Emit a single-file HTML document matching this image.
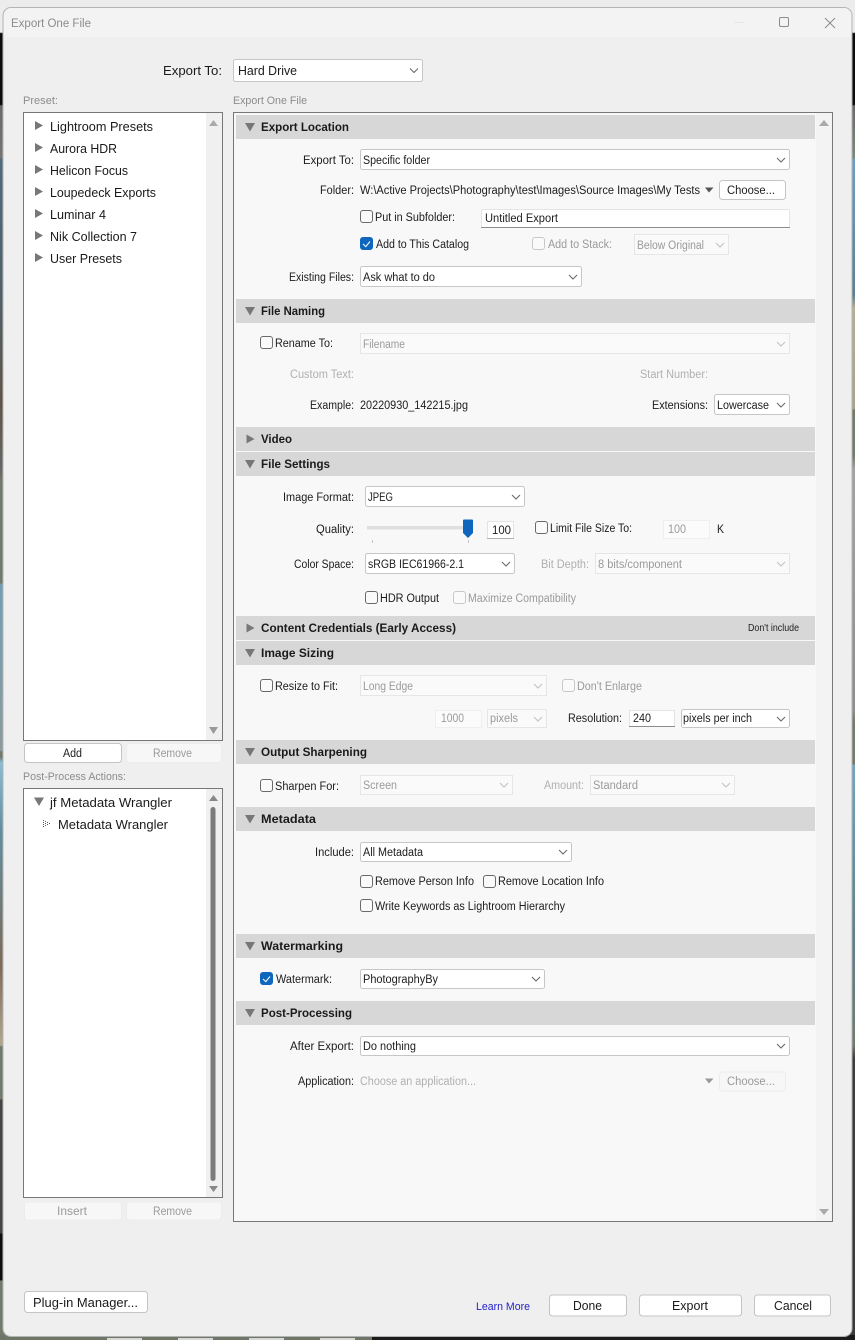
<!DOCTYPE html>
<html><head><meta charset="utf-8"><title>Export One File</title>
<style>
html,body{margin:0;padding:0;background:#eee;width:855px;height:1340px;overflow:hidden}
svg{display:block;filter:blur(.3px)}
text{font-family:"Liberation Sans",sans-serif;font-size:11.5px;fill:#1c1c1c}
.g{fill:#9a9a9a}.l{fill:#b0b0b0}.p{fill:#8c8c8c}
.b{font-weight:bold;font-size:11.5px;fill:#1a1a1a}
.m{font-size:12.5px;fill:#1a1a1a}
.sel{fill:#fff;stroke:#c6c6c6}.dis{fill:#fafafa;stroke:#e6e6e6}
.hd{fill:#d7d7d7}
.cb{fill:#fafafa;stroke:#6a6a6a}.cd{fill:#fafafa;stroke:#c8c8c8}.ck{fill:#0f66bd;stroke:#0f66bd}
.btn{fill:#fff;stroke:#c4c4c4}.bd{fill:#f7f7f7;stroke:#ececec}
.chev{fill:none;stroke:#666;stroke-width:1}.chevd{fill:none;stroke:#c0c0c0;stroke-width:1}
</style></head><body>
<svg xmlns="http://www.w3.org/2000/svg" width="855" height="1340" viewBox="0 0 855 1340">
<defs>
<linearGradient id="lft" x1="0" y1="0" x2="0" y2="1">
<stop offset="0" stop-color="#ececec"/><stop offset=".024" stop-color="#ececec"/><stop offset=".025" stop-color="#0c0c0c"/><stop offset=".078" stop-color="#0c0c0c"/><stop offset=".079" stop-color="#6a6a6a"/><stop offset=".118" stop-color="#747474"/><stop offset=".119" stop-color="#4f6a7c"/><stop offset=".22" stop-color="#50606a"/><stop offset=".3" stop-color="#5f5445"/><stop offset=".35" stop-color="#666"/><stop offset=".36" stop-color="#717a6b"/><stop offset=".435" stop-color="#717a6b"/><stop offset=".436" stop-color="#6f9fb5"/><stop offset=".56" stop-color="#8a9a9c"/><stop offset=".561" stop-color="#717a6b"/><stop offset=".565" stop-color="#717a6b"/><stop offset=".569" stop-color="#86bcd6"/><stop offset=".62" stop-color="#5f8f9f"/><stop offset=".72" stop-color="#7d6a58"/><stop offset=".78" stop-color="#b3a68c"/><stop offset=".781" stop-color="#717a6b"/><stop offset=".82" stop-color="#717a6b"/><stop offset=".821" stop-color="#444"/><stop offset=".92" stop-color="#444"/><stop offset=".921" stop-color="#0e0e0e"/><stop offset=".955" stop-color="#0e0e0e"/><stop offset=".956" stop-color="#717a6b"/><stop offset="1" stop-color="#717a6b"/>
</linearGradient>
<linearGradient id="rgt" x1="0" y1="0" x2="0" y2="1">
<stop offset="0" stop-color="#ececec"/><stop offset=".024" stop-color="#ececec"/><stop offset=".025" stop-color="#0c0c0c"/><stop offset=".078" stop-color="#0c0c0c"/><stop offset=".079" stop-color="#6a6a6a"/><stop offset=".118" stop-color="#7a8a78"/><stop offset=".119" stop-color="#6c9fc4"/><stop offset=".22" stop-color="#5a7f93"/><stop offset=".23" stop-color="#b6ae94"/><stop offset=".305" stop-color="#a8a28c"/><stop offset=".306" stop-color="#717a6b"/><stop offset=".34" stop-color="#717a6b"/><stop offset=".35" stop-color="#a0a4a0"/><stop offset=".53" stop-color="#8a8f8a"/><stop offset=".54" stop-color="#717a6b"/><stop offset=".57" stop-color="#717a6b"/><stop offset=".571" stop-color="#6fa6c0"/><stop offset=".7" stop-color="#5c7f8c"/><stop offset=".78" stop-color="#717a6b"/><stop offset=".79" stop-color="#3c3c3c"/><stop offset="1" stop-color="#3a3a3a"/>
</linearGradient>
<path id="c" d="M-4 -2 L0 2 L4 -2"/>
<path id="tr" d="M0.500 -4.500 L8.500 0 L0.500 4.500Z" fill="#777"/>
<path id="td" d="M-5 -4 L5 -4 L0 4.500Z" fill="#777"/>
<path id="tick" d="M3 7 L5.800 9.600 L10 4.500" fill="none" stroke="#fff" stroke-width="1"/>
</defs>

<!-- backdrop -->
<rect x="0" y="0" width="855" height="1340" fill="#ececec"/>
<rect x="0" y="0" width="5" height="1340" fill="url(#lft)"/>
<rect x="850" y="0" width="5" height="1340" fill="url(#rgt)"/>
<rect x="0" y="1335" width="372" height="5" fill="#6e7668"/>
<rect x="372" y="1335" width="483" height="5" fill="#1b1b1b"/>
<g fill="#d8d8d8"><rect x="107" y="1338" width="35" height="2"/><rect x="178" y="1338" width="35" height="2"/><rect x="249" y="1338" width="35" height="2"/><rect x="320" y="1338" width="35" height="2"/></g>

<!-- dialog -->
<rect x="3" y="7.500" width="849" height="1329" rx="8" fill="#efefef" stroke="#b4b4b4"/>
<path d="M4 37 V15.500 a7.500 7.500 0 0 1 7.500 -7.500 H844 a7.500 7.500 0 0 1 7.500 7.500 V37Z" fill="#f3f3f3"/>
<text x="11" y="27" class="p" textLength="80" lengthAdjust="spacingAndGlyphs">Export One File</text>
<path d="M734 22.500 H744" stroke="#e6e6e6" fill="none"/>
<rect x="779.500" y="17.500" width="9" height="9" rx="1.500" fill="none" stroke="#8a8a8a"/>
<path d="M825 18 L835 28 M835 18 L825 28" stroke="#8a8a8a" fill="none"/>

<!-- top export to -->
<text x="163" y="75" class="m" textLength="59" lengthAdjust="spacingAndGlyphs">Export To:</text>
<rect x="233.500" y="59.500" width="189" height="22" rx="2" class="sel"/>
<text x="238" y="75" class="m" textLength="59" lengthAdjust="spacingAndGlyphs">Hard Drive</text>
<use href="#c" x="414" y="70.500" class="chev"/>

<!-- left column -->
<text x="23" y="104" class="p" style="font-size:11px" textLength="35" lengthAdjust="spacingAndGlyphs">Preset:</text>
<rect x="23.500" y="112.500" width="199" height="628" fill="#fff" stroke="#777"/>
<rect x="206" y="113" width="16" height="627" fill="#f0f0f0"/>
<path d="M209 126 L213.500 120 L218 126Z" fill="#aaa"/><path d="M209 727 H218 L213.500 734Z" fill="#999"/>
<use href="#tr" x="34.500" y="125.500"/><text x="50" y="131" class="m" textLength="103" lengthAdjust="spacingAndGlyphs">Lightroom Presets</text>
<use href="#tr" x="34.500" y="147.500"/><text x="50" y="153" class="m" textLength="67" lengthAdjust="spacingAndGlyphs">Aurora HDR</text>
<use href="#tr" x="34.500" y="169.500"/><text x="50" y="175" class="m" textLength="78" lengthAdjust="spacingAndGlyphs">Helicon Focus</text>
<use href="#tr" x="34.500" y="191.500"/><text x="50" y="197" class="m" textLength="106" lengthAdjust="spacingAndGlyphs">Loupedeck Exports</text>
<use href="#tr" x="34.500" y="213.500"/><text x="50" y="219" class="m" textLength="56" lengthAdjust="spacingAndGlyphs">Luminar 4</text>
<use href="#tr" x="34.500" y="235.500"/><text x="50" y="241" class="m" textLength="87" lengthAdjust="spacingAndGlyphs">Nik Collection 7</text>
<use href="#tr" x="34.500" y="257.500"/><text x="50" y="263" class="m" textLength="72" lengthAdjust="spacingAndGlyphs">User Presets</text>
<rect x="24.500" y="743.500" width="97" height="19" rx="3" class="btn"/>
<text x="63" y="757" textLength="19" lengthAdjust="spacingAndGlyphs">Add</text>
<rect x="126.500" y="743.500" width="95" height="19" rx="3" class="bd"/>
<text x="153" y="757" class="g" textLength="39" lengthAdjust="spacingAndGlyphs">Remove</text>
<text x="23" y="780" class="p" style="font-size:11px" textLength="103" lengthAdjust="spacingAndGlyphs">Post-Process Actions:</text>
<rect x="23.500" y="788.500" width="199" height="409" fill="#fff" stroke="#777"/>
<rect x="206" y="789" width="16" height="408" fill="#f0f0f0"/>
<path d="M209 801 L213.500 795 L218 801Z" fill="#888"/><path d="M209 1186 H218 L213.500 1192Z" fill="#888"/>
<rect x="210.500" y="807" width="5" height="374" rx="2.500" fill="#7c7c7c"/>
<use href="#td" x="39" y="801.500"/>
<text x="50" y="807" class="m" textLength="122" lengthAdjust="spacingAndGlyphs">jf Metadata Wrangler</text>
<g fill="#555"><rect x="43" y="820" width="1" height="1"/><rect x="43" y="822" width="1" height="1"/><rect x="43" y="824" width="1" height="1"/><rect x="43" y="826" width="1" height="1"/><rect x="45" y="821" width="1" height="1"/><rect x="45" y="823" width="1" height="1"/><rect x="45" y="825" width="1" height="1"/><rect x="47" y="822" width="1" height="1"/><rect x="47" y="824" width="1" height="1"/><rect x="49" y="823" width="1" height="1"/></g>
<text x="58" y="829" class="m" textLength="110" lengthAdjust="spacingAndGlyphs">Metadata Wrangler</text>
<rect x="24.500" y="1202" width="97" height="18" rx="3" class="bd"/>
<text x="57" y="1215" class="g" textLength="30" lengthAdjust="spacingAndGlyphs">Insert</text>
<rect x="126.500" y="1202" width="95" height="18" rx="3" class="bd"/>
<text x="153" y="1215" class="g" textLength="39" lengthAdjust="spacingAndGlyphs">Remove</text>

<!-- right panel -->
<text x="233" y="104" class="p" style="font-size:11px" textLength="74" lengthAdjust="spacingAndGlyphs">Export One File</text>
<rect x="233.500" y="112.500" width="599" height="1109" fill="#f8f8f8" stroke="#777"/>
<rect x="816" y="113" width="16" height="1108" fill="#f3f3f3"/>
<path d="M819 126 L824 120 L829 126Z" fill="#aaa"/><path d="M819 1209 H829 L824 1215Z" fill="#aaa"/>

<!-- section headers -->
<rect x="236" y="115" width="579" height="24" class="hd"/><rect x="236" y="299" width="579" height="24" class="hd"/><rect x="236" y="427" width="579" height="24" class="hd"/><rect x="236" y="452" width="579" height="24" class="hd"/><rect x="236" y="616" width="579" height="24" class="hd"/><rect x="236" y="641" width="579" height="24" class="hd"/><rect x="236" y="740" width="579" height="24" class="hd"/><rect x="236" y="807" width="579" height="24" class="hd"/><rect x="236" y="934" width="579" height="24" class="hd"/><rect x="236" y="1001" width="579" height="24" class="hd"/>
<use href="#td" x="250" y="127"/><text x="261" y="131" class="b" textLength="88" lengthAdjust="spacingAndGlyphs">Export Location</text>
<use href="#td" x="250" y="311"/><text x="261" y="315" class="b" textLength="64" lengthAdjust="spacingAndGlyphs">File Naming</text>
<use href="#tr" x="246" y="439"/><text x="261" y="443" class="b" textLength="31" lengthAdjust="spacingAndGlyphs">Video</text>
<use href="#td" x="250" y="464"/><text x="261" y="468" class="b" textLength="69" lengthAdjust="spacingAndGlyphs">File Settings</text>
<use href="#tr" x="246" y="628"/><text x="261" y="632" class="b" textLength="195" lengthAdjust="spacingAndGlyphs">Content Credentials (Early Access)</text>
<text x="748" y="631" style="font-size:10px" textLength="51" lengthAdjust="spacingAndGlyphs">Don't include</text>
<use href="#td" x="250" y="653"/><text x="261" y="657" class="b" textLength="73" lengthAdjust="spacingAndGlyphs">Image Sizing</text>
<use href="#td" x="250" y="752"/><text x="261" y="756" class="b" textLength="106" lengthAdjust="spacingAndGlyphs">Output Sharpening</text>
<use href="#td" x="250" y="819"/><text x="261" y="823" class="b" textLength="55" lengthAdjust="spacingAndGlyphs">Metadata</text>
<use href="#td" x="250" y="946"/><text x="261" y="950" class="b" textLength="82" lengthAdjust="spacingAndGlyphs">Watermarking</text>
<use href="#td" x="250" y="1013"/><text x="261" y="1017" class="b" textLength="91" lengthAdjust="spacingAndGlyphs">Post-Processing</text>

<!-- export location -->
<text x="303" y="164" textLength="51" lengthAdjust="spacingAndGlyphs">Export To:</text>
<rect x="360.500" y="149.500" width="429" height="20" rx="2" class="sel"/>
<text x="363" y="164" textLength="67" lengthAdjust="spacingAndGlyphs">Specific folder</text>
<use href="#c" x="781" y="160" class="chev"/>
<text x="320" y="194" textLength="34" lengthAdjust="spacingAndGlyphs">Folder:</text>
<text x="360" y="194" textLength="340" lengthAdjust="spacingAndGlyphs">W:\Active Projects\Photography\test\Images\Source Images\My Tests</text>
<path d="M705 187.500 H713.500 L709 192.500Z" fill="#555"/>
<rect x="719.500" y="180.500" width="66" height="19" rx="3" class="btn"/>
<text x="727" y="194" textLength="48" lengthAdjust="spacingAndGlyphs">Choose...</text>
<rect x="360.500" y="210.500" width="12" height="12" rx="2.500" class="cb"/>
<text x="375" y="221" textLength="80" lengthAdjust="spacingAndGlyphs">Put in Subfolder:</text>
<rect x="481.500" y="209.500" width="308" height="18" rx="1" fill="#fff" stroke="#e4e4e4"/><path d="M481 227.500 H790" stroke="#8c8c8c"/>
<text x="485" y="222" textLength="73" lengthAdjust="spacingAndGlyphs">Untitled Export</text>
<rect x="360.500" y="237.500" width="12" height="12" rx="2.500" class="ck"/><use href="#tick" x="360" y="237"/>
<text x="376" y="248" textLength="93" lengthAdjust="spacingAndGlyphs">Add to This Catalog</text>
<rect x="532.500" y="237.500" width="12" height="12" rx="2.500" class="cd"/>
<text x="548" y="248" class="g" textLength="64" lengthAdjust="spacingAndGlyphs">Add to Stack:</text>
<rect x="634.500" y="234.500" width="94" height="20" class="dis"/>
<text x="637" y="249" class="g" textLength="67" lengthAdjust="spacingAndGlyphs">Below Original</text>
<use href="#c" x="720" y="245" class="chevd"/>
<text x="289" y="281" textLength="65" lengthAdjust="spacingAndGlyphs">Existing Files:</text>
<rect x="360.500" y="266.500" width="221" height="20" rx="2" class="sel"/>
<text x="363" y="281" textLength="72" lengthAdjust="spacingAndGlyphs">Ask what to do</text>
<use href="#c" x="573" y="277" class="chev"/>

<!-- file naming -->
<rect x="260.500" y="336.500" width="12" height="12" rx="2.500" class="cb"/>
<text x="275" y="347" textLength="58" lengthAdjust="spacingAndGlyphs">Rename To:</text>
<rect x="360.500" y="333.500" width="429" height="20" class="dis"/>
<text x="363" y="348" class="g" textLength="42" lengthAdjust="spacingAndGlyphs">Filename</text>
<use href="#c" x="781" y="344" class="chevd"/>
<text x="290" y="378" class="l" textLength="64" lengthAdjust="spacingAndGlyphs">Custom Text:</text>
<text x="640" y="378" class="l" textLength="68" lengthAdjust="spacingAndGlyphs">Start Number:</text>
<text x="310" y="409" textLength="44" lengthAdjust="spacingAndGlyphs">Example:</text>
<text x="360" y="409" textLength="108" lengthAdjust="spacingAndGlyphs">20220930_142215.jpg</text>
<text x="652" y="409" textLength="56" lengthAdjust="spacingAndGlyphs">Extensions:</text>
<rect x="714.500" y="394.500" width="75" height="20" rx="2" class="sel"/>
<text x="717" y="409" textLength="52" lengthAdjust="spacingAndGlyphs">Lowercase</text>
<use href="#c" x="781" y="405" class="chev"/>

<!-- file settings -->
<text x="283" y="501" textLength="71" lengthAdjust="spacingAndGlyphs">Image Format:</text>
<rect x="365.500" y="486.500" width="159" height="20" rx="2" class="sel"/>
<text x="368" y="501" textLength="25" lengthAdjust="spacingAndGlyphs">JPEG</text>
<use href="#c" x="516" y="497" class="chev"/>
<text x="316" y="533" textLength="38" lengthAdjust="spacingAndGlyphs">Quality:</text>
<rect x="367" y="526" width="103" height="3.500" fill="#dfdfdf"/>
<path d="M463 520.500 a1 1 0 0 1 1 -1 H472 a1 1 0 0 1 1 1 V533 L468 538 L463 533Z" fill="#0f66bd"/>
<path d="M372.500 540 V543 M468.500 540 V543" stroke="#c4c4c4"/>
<rect x="487.500" y="521.500" width="26" height="17" fill="#fff" stroke="#e4e4e4"/><path d="M487 538.500 H514" stroke="#b0b0b0"/>
<text x="492" y="534" textLength="19" lengthAdjust="spacingAndGlyphs">100</text>
<rect x="535.500" y="521.500" width="12" height="12" rx="2.500" class="cb"/>
<text x="550" y="532" textLength="82" lengthAdjust="spacingAndGlyphs">Limit File Size To:</text>
<rect x="663.500" y="520.500" width="46" height="18" fill="#fbfbfb" stroke="#efefef"/>
<text x="668" y="533" class="g" textLength="18" lengthAdjust="spacingAndGlyphs">100</text>
<text x="717" y="533" textLength="7" lengthAdjust="spacingAndGlyphs">K</text>
<text x="294" y="568" textLength="60" lengthAdjust="spacingAndGlyphs">Color Space:</text>
<rect x="365.500" y="553.500" width="149" height="20" rx="2" class="sel"/>
<text x="368" y="568" textLength="96" lengthAdjust="spacingAndGlyphs">sRGB IEC61966-2.1</text>
<use href="#c" x="506" y="564" class="chev"/>
<text x="541" y="568" class="l" textLength="48" lengthAdjust="spacingAndGlyphs">Bit Depth:</text>
<rect x="595.500" y="553.500" width="194" height="20" class="dis"/>
<text x="598" y="568" class="g" textLength="84" lengthAdjust="spacingAndGlyphs">8 bits/component</text>
<use href="#c" x="781" y="564" class="chevd"/>
<rect x="365.500" y="591.500" width="12" height="12" rx="2.500" class="cb"/>
<text x="380" y="602" textLength="59" lengthAdjust="spacingAndGlyphs">HDR Output</text>
<rect x="453.500" y="591.500" width="12" height="12" rx="2.500" class="cd"/>
<text x="468" y="602" class="g" textLength="108" lengthAdjust="spacingAndGlyphs">Maximize Compatibility</text>

<!-- image sizing -->
<rect x="260.500" y="679.500" width="12" height="12" rx="2.500" class="cb"/>
<text x="275" y="690" textLength="63" lengthAdjust="spacingAndGlyphs">Resize to Fit:</text>
<rect x="360.500" y="675.500" width="186" height="20" class="dis"/>
<text x="363" y="690" class="g" textLength="50" lengthAdjust="spacingAndGlyphs">Long Edge</text>
<use href="#c" x="538" y="686" class="chevd"/>
<rect x="562.500" y="679.500" width="12" height="12" rx="2.500" class="cd"/>
<text x="577" y="690" class="g" textLength="65" lengthAdjust="spacingAndGlyphs">Don't Enlarge</text>
<rect x="435.500" y="710.500" width="46" height="17" fill="#fbfbfb" stroke="#efefef"/>
<text x="441" y="722" class="g" textLength="23" lengthAdjust="spacingAndGlyphs">1000</text>
<rect x="487.500" y="709.500" width="59" height="18" class="dis"/>
<text x="490" y="722" class="g" textLength="28" lengthAdjust="spacingAndGlyphs">pixels</text>
<use href="#c" x="538" y="719" class="chevd"/>
<text x="568" y="722" textLength="54" lengthAdjust="spacingAndGlyphs">Resolution:</text>
<rect x="629.500" y="710.500" width="45" height="16" fill="#fff" stroke="#e4e4e4"/><path d="M629 726.500 H675" stroke="#8c8c8c"/>
<text x="633" y="722" textLength="18" lengthAdjust="spacingAndGlyphs">240</text>
<rect x="681.500" y="709.500" width="108" height="18" rx="2" class="sel"/>
<text x="683" y="722" textLength="69" lengthAdjust="spacingAndGlyphs">pixels per inch</text>
<use href="#c" x="781" y="719" class="chev"/>

<!-- output sharpening -->
<rect x="260.500" y="779.500" width="12" height="12" rx="2.500" class="cb"/>
<text x="275" y="790" textLength="64" lengthAdjust="spacingAndGlyphs">Sharpen For:</text>
<rect x="360.500" y="775.500" width="152" height="19" class="dis"/>
<text x="363" y="789" class="g" textLength="34" lengthAdjust="spacingAndGlyphs">Screen</text>
<use href="#c" x="504" y="785" class="chevd"/>
<text x="544" y="789" class="l" textLength="40" lengthAdjust="spacingAndGlyphs">Amount:</text>
<rect x="590.500" y="775.500" width="144" height="19" class="dis"/>
<text x="593" y="789" class="g" textLength="45" lengthAdjust="spacingAndGlyphs">Standard</text>
<use href="#c" x="726" y="785" class="chevd"/>

<!-- metadata -->
<text x="315" y="856" textLength="39" lengthAdjust="spacingAndGlyphs">Include:</text>
<rect x="360.500" y="842.500" width="211" height="19" rx="2" class="sel"/>
<text x="363" y="856" textLength="60" lengthAdjust="spacingAndGlyphs">All Metadata</text>
<use href="#c" x="563" y="852" class="chev"/>
<rect x="360.500" y="875.500" width="12" height="12" rx="2.500" class="cb"/>
<text x="375" y="885" textLength="99" lengthAdjust="spacingAndGlyphs">Remove Person Info</text>
<rect x="483.500" y="875.500" width="12" height="12" rx="2.500" class="cb"/>
<text x="498" y="885" textLength="106" lengthAdjust="spacingAndGlyphs">Remove Location Info</text>
<rect x="360.500" y="899.500" width="12" height="12" rx="2.500" class="cb"/>
<text x="375" y="910" textLength="190" lengthAdjust="spacingAndGlyphs">Write Keywords as Lightroom Hierarchy</text>

<!-- watermarking -->
<rect x="260.500" y="972.500" width="12" height="12" rx="2.500" class="ck"/><use href="#tick" x="260" y="972"/>
<text x="276" y="983" textLength="56" lengthAdjust="spacingAndGlyphs">Watermark:</text>
<rect x="360.500" y="969.500" width="184" height="19" rx="2" class="sel"/>
<text x="363" y="983" textLength="75" lengthAdjust="spacingAndGlyphs">PhotographyBy</text>
<use href="#c" x="536" y="979" class="chev"/>

<!-- post-processing -->
<text x="290" y="1050" textLength="64" lengthAdjust="spacingAndGlyphs">After Export:</text>
<rect x="360.500" y="1036.500" width="429" height="19" rx="2" class="sel"/>
<text x="363" y="1050" textLength="53" lengthAdjust="spacingAndGlyphs">Do nothing</text>
<use href="#c" x="781" y="1046" class="chev"/>
<text x="298" y="1085" textLength="56" lengthAdjust="spacingAndGlyphs">Application:</text>
<text x="360" y="1085" class="l" textLength="116" lengthAdjust="spacingAndGlyphs">Choose an application...</text>
<path d="M705 1078.500 H713.500 L709 1083.500Z" fill="#999"/>
<rect x="719.500" y="1072" width="66" height="19" rx="3" class="bd"/>
<text x="727" y="1085" class="g" textLength="48" lengthAdjust="spacingAndGlyphs">Choose...</text>

<!-- bottom buttons -->
<rect x="24.500" y="1291.500" width="123" height="21" rx="3" class="btn"/>
<text x="33" y="1307" class="m" textLength="105" lengthAdjust="spacingAndGlyphs">Plug-in Manager...</text>
<text x="476" y="1310" style="fill:#2222cc;font-size:11px" textLength="54" lengthAdjust="spacingAndGlyphs">Learn More</text>
<rect x="549.500" y="1295" width="77" height="21" rx="3" class="btn"/>
<text x="573" y="1310" class="m" textLength="29" lengthAdjust="spacingAndGlyphs">Done</text>
<rect x="639.500" y="1295" width="102" height="21" rx="3" class="btn"/>
<text x="672" y="1310" class="m" textLength="36" lengthAdjust="spacingAndGlyphs">Export</text>
<rect x="754.500" y="1295" width="76" height="21" rx="3" class="btn"/>
<text x="774" y="1310" class="m" textLength="38" lengthAdjust="spacingAndGlyphs">Cancel</text>
</svg>
</body></html>
